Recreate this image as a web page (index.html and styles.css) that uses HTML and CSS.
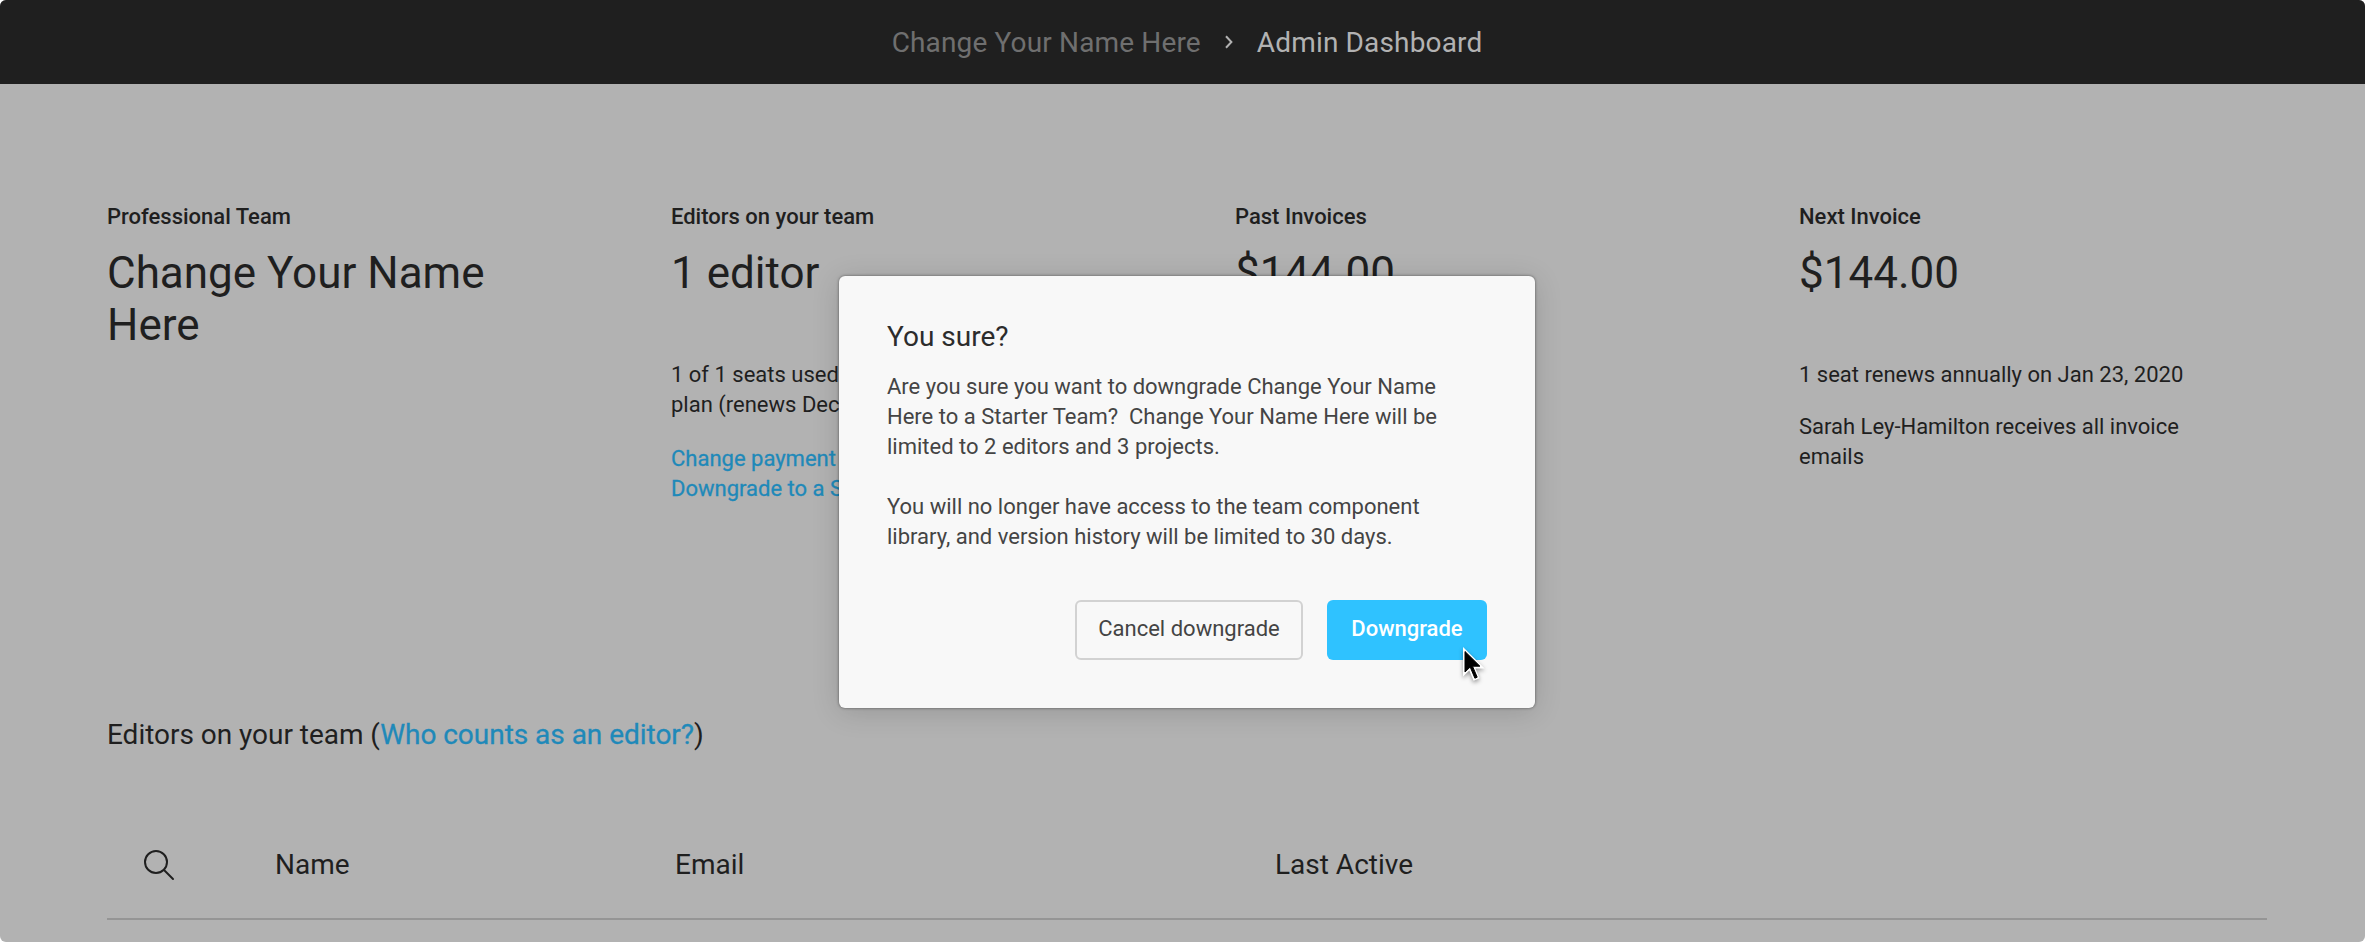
FILE: index.html
```html
<!DOCTYPE html>
<html lang="en">
<head>
<meta charset="utf-8">
<title>Admin Dashboard</title>
<link rel="stylesheet" href="styles.css">
</head>
<body>
<div class="window">
  <header class="topbar">
    <span class="crumb-parent">Change Your Name Here</span>
    <svg class="crumb-arrow" width="10" height="14" viewBox="0 0 10 14"><path d="M2 1.2 7.4 7 2 12.8" fill="none" stroke="currentColor" stroke-width="2"/></svg>
    <span class="crumb-current">Admin Dashboard</span>
  </header>
  <main class="page">
    <section class="summary">
      <div class="card">
        <h3 class="label">Professional Team</h3>
        <p class="value">Change Your Name Here</p>
      </div>
      <div class="card">
        <h3 class="label">Editors on your team</h3>
        <p class="value">1 editor</p>
        <p class="text">1 of 1 seats used<br>plan (renews Dec</p>
        <p class="links"><a class="link">Change payment</a><a class="link">Downgrade to a Starter</a></p>
      </div>
      <div class="card">
        <h3 class="label">Past Invoices</h3>
        <p class="value">$144.00</p>
      </div>
      <div class="card">
        <h3 class="label">Next Invoice</h3>
        <p class="value">$144.00</p>
        <p class="text">1 seat renews annually on Jan 23, 2020</p>
        <p class="text">Sarah Ley-Hamilton receives all invoice emails</p>
      </div>
    </section>
    <h2 class="section-title">Editors on your team (<a class="link">Who counts as an editor?</a>)</h2>
    <div class="table-head">
      <svg class="search" width="34" height="34" viewBox="0 0 34 34"><g fill="none" stroke="currentColor" stroke-width="2"><circle cx="15" cy="14" r="11"/><path d="M23 22 32 31" stroke-linecap="round"/></g></svg>
      <span>Name</span><span>Email</span><span>Last Active</span>
    </div>
  </main>
  <div class="modal" role="dialog">
    <h2 class="modal-title">You sure?</h2>
    <p class="modal-text">Are you sure you want to downgrade Change Your Name<br>Here to a Starter Team?&nbsp; Change Your Name Here will be<br>limited to 2 editors and 3 projects.</p>
    <p class="modal-text">You will no longer have access to the team component<br>library, and version history will be limited to 30 days.</p>
    <div class="actions">
      <button class="btn btn-plain">Cancel downgrade</button>
      <button class="btn btn-primary">Downgrade</button>
    </div>
    <svg class="cursor" width="30" height="44" viewBox="0 0 30 44"><path d="M3 2V31.5L9.3 25.5 13.6 35.8 19.6 33.2 15.4 23.4H24.6Z" fill="#fff"/><path d="M5 6.5V27L10.2 22 14.9 33.2 17.2 32.2 12.5 21.2H19.9Z" fill="#000" stroke="#000"/></svg>
  </div>
</div>
</body>
</html>
```
FILE: styles.css
```css
* { box-sizing: border-box; }
body { margin: 0; background: #fff; font-family: Roboto, "Liberation Sans", sans-serif; color: #1f1f1f; }
h2, h3, p { margin: 0; font-weight: 400; }
.window { position: relative; width: 2365px; height: 942px; overflow: hidden; border-radius: 6px; background: #b2b2b2; }
.topbar { display: flex; align-items: center; justify-content: center; height: 84px; padding: 2px 0 0 9px; background: #1f1f1f; font-size: 28px; line-height: 40px; letter-spacing: .15px; }
.crumb-parent { color: #6f6f6f; }
.crumb-arrow { margin: 0 23px 2px; color: #b2b2b2; }
.crumb-current { color: #b2b2b2; }
.page { padding: 118px 98px 0 107px; }
.summary { display: grid; grid-template-columns: repeat(4, 564px); height: 513px; }
.label { font-size: 22px; line-height: 30px; font-weight: 500; }
.value { width: 420px; height: 104px; margin: 15px 0 9px; font-size: 44px; line-height: 52px; }
.text { width: 400px; margin-bottom: 22px; font-size: 22px; line-height: 30px; }
.links { display: flex; flex-direction: column; margin-top: 24px; font-size: 22px; line-height: 30px; }
.link { color: #1f89b9; -webkit-text-stroke: .3px #1f89b9; }
.section-title { font-size: 28px; line-height: 40px; letter-spacing: -.03px; }
.table-head { display: grid; grid-template-columns: 168px 400px 600px 1fr; align-items: center; height: 116px; margin-top: 49px; padding-top: 8px; border-bottom: 2px solid #959595; font-size: 28px; line-height: 40px; }
.search { margin-left: 34px; }
.modal { position: absolute; left: 839px; top: 276px; width: 696px; height: 432px; padding: 41px 48px 48px; border-radius: 6px; background: #f8f8f8; box-shadow: 0 4px 28px rgba(0,0,0,.15), 0 0 3px rgba(0,0,0,.5); color: #444; }
.modal-title { font-size: 28px; line-height: 40px; color: #2c2c2c; }
.modal-text { margin: 15px 0 30px; font-size: 22px; line-height: 30px; }
.modal-text + .modal-text { margin: 0; }
.actions { display: flex; justify-content: flex-end; gap: 24px; margin-top: 48px; }
.btn { height: 60px; padding: 0 0 2px; border: 0; border-radius: 6px; font: 400 22px/30px Roboto, sans-serif; }
.btn-plain { width: 228px; border: 2px solid #d2d2d2; background: #f8f8f8; color: #444; }
.btn-primary { width: 160px; background: #2fc2ff; color: #fff; font-weight: 500; }
.cursor { position: absolute; left: 621px; top: 369px; filter: drop-shadow(0 2px 2px rgba(0,0,0,.4)); }
```
